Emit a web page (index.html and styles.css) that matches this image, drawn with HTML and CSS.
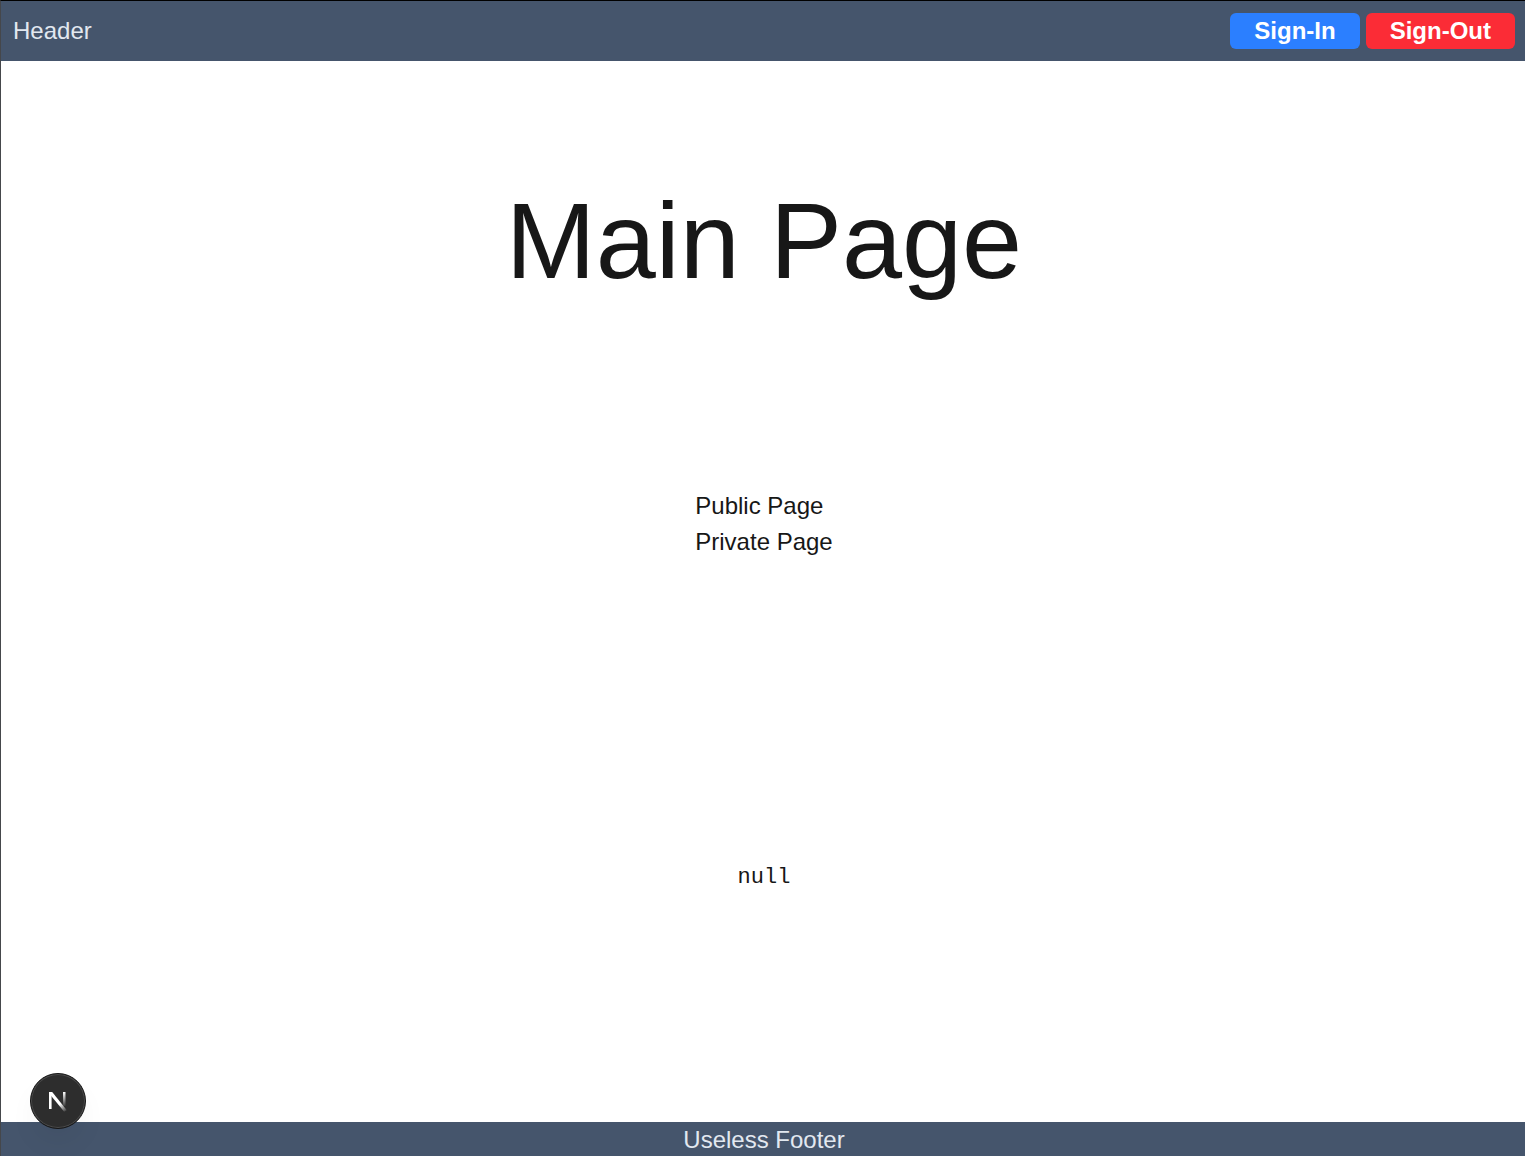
FILE: index.html
```html
<!DOCTYPE html>
<html lang="en">
<head>
  <meta charset="utf-8">
  <meta name="viewport" content="width=device-width, initial-scale=1">
  <title>Main Page</title>
  <link rel="stylesheet" href="styles.css">
</head>
<body class="page">
  <header class="header">
    <span>Header</span>
    <div class="actions">
      <button type="button" class="button button-in">Sign-In</button>
      <button type="button" class="button button-out">Sign-Out</button>
    </div>
  </header>
  <main class="main">
    <h1 class="title">Main Page</h1>
    <nav class="links">
      <a href="#public">Public Page</a>
      <a href="#private">Private Page</a>
    </nav>
    <pre class="session">null</pre>
  </main>
  <footer class="footer">Useless Footer</footer>
  <button type="button" class="dev-badge" aria-label="Open developer tools">
    <svg width="20" height="22" viewBox="0 0 20 22" fill="none" aria-hidden="true">
      <defs>
        <linearGradient id="stem" x1="0" y1="2" x2="0" y2="17" gradientUnits="userSpaceOnUse">
          <stop stop-color="#fff"/>
          <stop offset="1" stop-color="#fff" stop-opacity="0"/>
        </linearGradient>
        <linearGradient id="diagonal" x1="12" y1="14" x2="18" y2="22" gradientUnits="userSpaceOnUse">
          <stop stop-color="#fff"/>
          <stop offset="1" stop-color="#fff" stop-opacity="0"/>
        </linearGradient>
      </defs>
      <path d="M1 2h2.6v17H1z" fill="#fff"/>
      <path d="M1 2h3.2l14.6 18.2-2.6 1.6L1.6 4z" fill="url(#diagonal)"/>
      <path d="M15 2h2.5v14H15z" fill="url(#stem)"/>
    </svg>
  </button>
</body>
</html>
```
FILE: styles.css
```css
* {
  box-sizing: border-box;
}

.page {
  display: flex;
  flex-direction: column;
  min-height: 100vh;
  margin: 0;
  border-top: 1px solid #000;
  border-left: 1px solid #45474b;
  background: #fff;
  color: #171717;
  font: 24px/36px "Liberation Sans", Arial, sans-serif;
}

.header {
  display: flex;
  align-items: center;
  justify-content: space-between;
  padding: 12px 10px 12px 12px;
  background: #45556c;
  color: #e2e8f0;
}

.actions {
  display: flex;
  gap: 6px;
}

.button {
  padding: 0 24px;
  border: 0;
  border-radius: 6px;
  color: #fff;
  font: inherit;
  font-weight: 700;
  cursor: pointer;
}

.button-in {
  background: #2b7fff;
}

.button-out {
  background: #fb2c36;
}

.main {
  display: grid;
  flex: 1;
  grid-template-rows: 360px 206px 1fr;
  place-items: center;
  padding-left: 2px;
}

.title {
  margin: 0;
  font-size: 108px;
  font-weight: 400;
  line-height: 108px;
}

.links {
  display: flex;
  flex-direction: column;
}

.links a {
  color: inherit;
  text-decoration: none;
}

.session {
  margin: 0;
  padding-top: 6px;
  font-family: "Liberation Mono", monospace;
  font-size: 22px;
}

.footer {
  padding: 2px 0 0 2px;
  background: #45556c;
  color: #e2e8f0;
  line-height: 32px;
  text-align: center;
}

.dev-badge {
  position: fixed;
  bottom: 27px;
  left: 30px;
  display: grid;
  place-items: center;
  width: 56px;
  height: 56px;
  padding: 0;
  border: 1px solid #171717;
  border-radius: 50%;
  background: #2d2d2d;
  box-shadow: inset 0 0 0 1px #4c4c4c, 0 16px 32px -8px rgba(0, 0, 0, 0.08);
  cursor: pointer;
}
```
